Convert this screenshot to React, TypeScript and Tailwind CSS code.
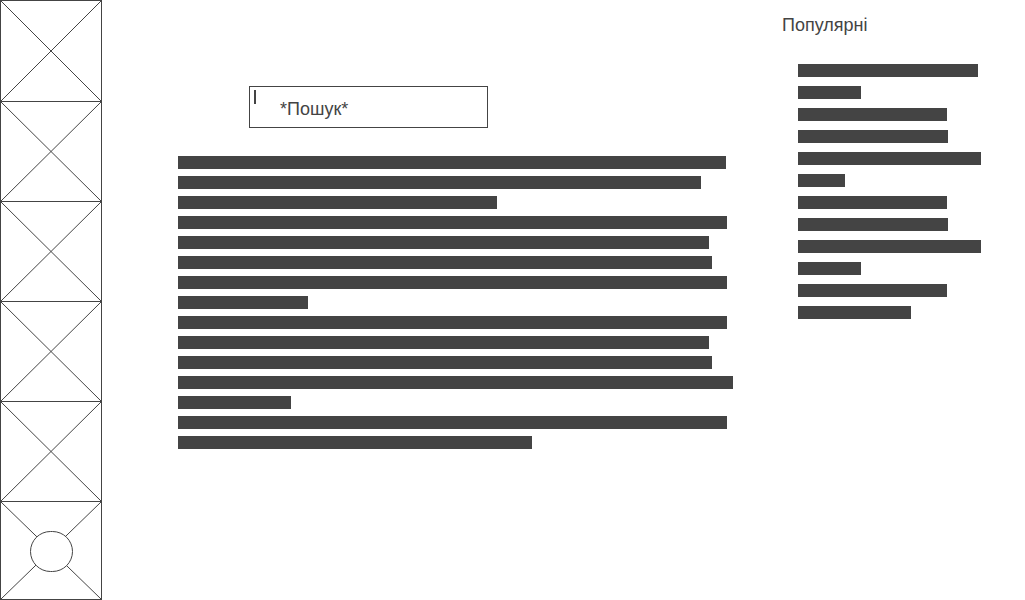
import React from "react";

const mainBars = [548, 523, 319, 549, 531, 534, 549, 130, 549, 531, 534, 555, 113, 549, 354];
const popularBars = [180, 63, 149, 150, 183, 47, 149, 150, 183, 63, 149, 113];

function CrossBox({ height, last = false, circle = false }: { height: number; last?: boolean; circle?: boolean }) {
    return (
        <div
            className={`relative w-full border-t border-[#444] ${last ? "border-b" : ""}`}
            style={{ height }}
        >
            <svg className="absolute inset-0 h-full w-full" viewBox="0 0 100 100" preserveAspectRatio="none">
                <line x1="0" y1="0" x2="100" y2="100" stroke="#444" strokeWidth="1" vectorEffect="non-scaling-stroke" />
                <line x1="100" y1="0" x2="0" y2="100" stroke="#444" strokeWidth="1" vectorEffect="non-scaling-stroke" />
            </svg>
            {circle && (
                <div className="absolute left-[29px] top-[29px] h-[41px] w-[43px] rounded-full border border-[#444] bg-white" />
            )}
        </div>
    );
}

export default function App() {
    return (
        <div className="flex h-[600px] w-[1025px] bg-white font-['Liberation_Sans',Arial,sans-serif] text-[#444]">
            <aside className="flex h-[600px] w-[102px] shrink-0 flex-col border-x border-[#444]">
                <CrossBox height={101} />
                <CrossBox height={100} />
                <CrossBox height={100} />
                <CrossBox height={100} />
                <CrossBox height={100} />
                <CrossBox height={99} last circle />
            </aside>

            <main className="w-[680px] shrink-0 pl-[76px] pt-[86px]">
                <div className="relative ml-[71px] h-[42px] w-[239px] border border-[#444]">
                    <span className="absolute left-[4px] top-[3px] h-[14px] w-[2px] bg-[#444]" />
                    <p className="pl-[30px] pt-[12px] text-[18px] leading-[20px]">*Пошук*</p>
                </div>
                <div className="mt-[28px] flex flex-col gap-[7px]">
                    {mainBars.map((w, i) => (
                        <div key={i} className="h-[13px] bg-[#444]" style={{ width: w }} />
                    ))}
                </div>
            </main>

            <section className="pt-[15px]">
                <h3 className="text-[18px] leading-[20px]">Популярні</h3>
                <div className="mt-[29px] flex flex-col gap-[9px] pl-[16px]">
                    {popularBars.map((w, i) => (
                        <div key={i} className="h-[13px] bg-[#444]" style={{ width: w }} />
                    ))}
                </div>
            </section>
        </div>
    );
}
